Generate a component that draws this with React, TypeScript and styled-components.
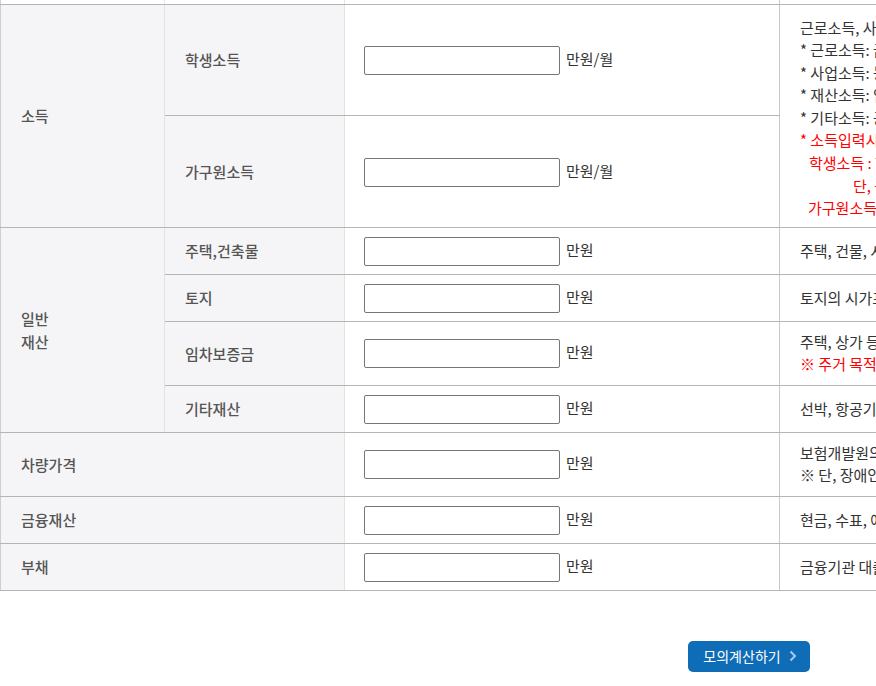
import styled, { createGlobalStyle } from 'styled-components';

const GlobalStyle = createGlobalStyle`
    html, body {
        margin: 0;
        padding: 0;
        background: #fff;
        overflow: hidden;
    }
    body {
        font-family: "Noto Sans CJK KR", "Noto Sans", sans-serif;
        color: #333;
    }
`;

const Page = styled.div`
    width: 1498px;
`;

const Table = styled.table`
    width: 100%;
    border-collapse: collapse;
    table-layout: fixed;
    border-left: 1px solid #cfcfcf;
    font-size: 15px;
`;

const Spacer = styled.tr`
    height: 4px;
    td {
        padding: 0;
        border-bottom: 1px solid #b5b5b5;
    }
`;

const Head = styled.td`
    background: #f5f5f7;
    color: #555;
    font-weight: 500;
    padding: 0 20px;
    vertical-align: middle;
    line-height: 23px;
    border-bottom: 1px solid #b5b5b5;
    border-right: 1px solid #e3e3e3;
`;

const InputCell = styled.td`
    padding: 9px 20px 8px 19px;
    vertical-align: middle;
    border-bottom: 1px solid #b5b5b5;
    border-right: 1px solid #c9c9c9;
`;

const Field = styled.div`
    display: flex;
    align-items: center;
`;

const Box = styled.input`
    box-sizing: border-box;
    width: 196px;
    height: 29px;
    border: 1px solid #767676;
    border-radius: 2px;
    padding: 0 6px;
    font: inherit;
`;

const Unit = styled.span`
    margin: 0 0 4px 6px;
    color: #333;
`;

const Desc = styled.td<{ $tall?: boolean }>`
    padding: ${p => (p.$tall ? '12px 20px 7px' : '9px 20px')};
    vertical-align: middle;
    line-height: ${p => (p.$tall ? '22.6px' : '22.5px')};
    white-space: nowrap;
    color: #333;
    border-bottom: 1px solid #b5b5b5;
`;

const Line = styled.div<{ $red?: boolean; $indent?: number }>`
    color: ${p => (p.$red ? '#ff0000' : 'inherit')};
    padding-left: ${p => p.$indent ?? 0}px;
`;

const Footer = styled.div`
    display: flex;
    justify-content: center;
    padding-top: 50px;
`;

const CalcButton = styled.button`
    display: flex;
    align-items: center;
    justify-content: center;
    gap: 8px;
    width: 122px;
    height: 31px;
    padding: 0 0 0 2px;
    border: 0;
    border-radius: 5px;
    background: #0f6cb6;
    color: #fff;
    font-family: inherit;
    font-size: 14px;
    cursor: pointer;
`;

const Chevron = () => (
    <svg width="8" height="14" viewBox="0 0 8 14">
        <path d="M1.5 2.5 L6 7 L1.5 11.5" fill="none" stroke="#a9c9e9" strokeWidth="2" />
    </svg>
);

const Amount = ({ unit = '만원' }: { unit?: string }) => (
    <InputCell>
        <Field>
            <Box type="text" />
            <Unit>{unit}</Unit>
        </Field>
    </InputCell>
);

export default function App() {
    return (
        <Page>
            <GlobalStyle />
            <Table>
                <colgroup>
                    <col style={{ width: 164 }} />
                    <col style={{ width: 180 }} />
                    <col style={{ width: 435 }} />
                    <col />
                </colgroup>
                <tbody>
                    <Spacer>
                        <td style={{ borderRight: '1px solid #e3e3e3' }} />
                        <td style={{ borderRight: '1px solid #e3e3e3' }} />
                        <td style={{ borderRight: '1px solid #c9c9c9' }} />
                        <td />
                    </Spacer>
                    <tr>
                        <Head rowSpan={2}>소득</Head>
                        <Head>학생소득</Head>
                        <Amount unit="만원/월" />
                        <Desc rowSpan={2} $tall>
                            <Line>근로소득, 사업소득, 재산소득, 기타소득을 합산한 월평균 금액을 입력하세요.</Line>
                            <Line>* 근로소득: 급여, 상여금 등 근로의 제공으로 받은 소득</Line>
                            <Line>* 사업소득: 농업, 임업, 어업, 기타 사업으로 얻은 소득</Line>
                            <Line>* 재산소득: 임대소득, 이자소득, 배당소득, 연금소득</Line>
                            <Line>* 기타소득: 공적이전소득(각종 수당, 연금 등)</Line>
                            <Line $red>* 소득입력시 유의사항</Line>
                            <Line $red $indent={9}>학생소득 : 학생 본인의 월평균 소득</Line>
                            <Line $red $indent={53}>단, 근로·사업소득은 연간 소득을 12로 나누어 입력</Line>
                            <Line $red $indent={8}>가구원소득 : 학생 본인을 제외한 가구원의 소득 합계</Line>
                        </Desc>
                    </tr>
                    <tr>
                        <Head>가구원소득</Head>
                        <Amount unit="만원/월" />
                    </tr>
                    <tr>
                        <Head rowSpan={4}>
                            일반
                            <br />
                            재산
                        </Head>
                        <Head>주택,건축물</Head>
                        <Amount />
                        <Desc>주택, 건물, 시설물 등의 시가표준액을 입력하세요.</Desc>
                    </tr>
                    <tr>
                        <Head>토지</Head>
                        <Amount />
                        <Desc>토지의 시가표준액(공시지가)을 입력하세요.</Desc>
                    </tr>
                    <tr>
                        <Head>임차보증금</Head>
                        <Amount />
                        <Desc>
                            <Line>주택, 상가 등의 임차보증금(전세금 포함)을 입력하세요.</Line>
                            <Line $red>※ 주거 목적의 임차보증금은 일부 공제됩니다.</Line>
                        </Desc>
                    </tr>
                    <tr>
                        <Head>기타재산</Head>
                        <Amount />
                        <Desc>선박, 항공기, 회원권 등의 시가표준액을 입력하세요.</Desc>
                    </tr>
                    <tr>
                        <Head colSpan={2}>차량가격</Head>
                        <Amount />
                        <Desc>
                            <Line>보험개발원의 차량기준가액을 입력하세요.</Line>
                            <Line>※ 단, 장애인 사용 차량 등은 제외됩니다.</Line>
                        </Desc>
                    </tr>
                    <tr>
                        <Head colSpan={2}>금융재산</Head>
                        <Amount />
                        <Desc>현금, 수표, 예금, 주식 등의 금액을 입력하세요.</Desc>
                    </tr>
                    <tr>
                        <Head colSpan={2}>부채</Head>
                        <Amount />
                        <Desc>금융기관 대출금, 임대보증금 등을 입력하세요.</Desc>
                    </tr>
                </tbody>
            </Table>
            <Footer>
                <CalcButton type="button">
                    모의계산하기
                    <Chevron />
                </CalcButton>
            </Footer>
        </Page>
    );
}
